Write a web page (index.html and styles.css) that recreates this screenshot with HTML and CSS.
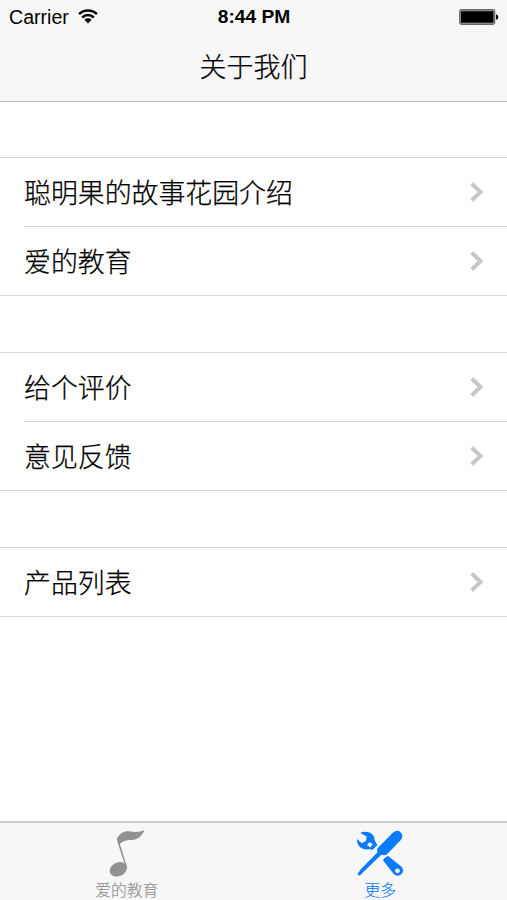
FILE: index.html
```html
<!DOCTYPE html>
<html lang="zh-CN">
<head>
<meta charset="utf-8">
<title>关于我们</title>
<link rel="stylesheet" href="styles.css">
</head>
<body>
<div class="screen">
  <header class="header">
    <div class="status">
      <div class="status-left">
        <span class="carrier">Carrier</span>
        <svg class="wifi" viewBox="0 0 20 15">
          <path d="M1.1 5.2A12.6 12.6 0 0 1 18.9 5.2M4.2 8.5A8.2 8.2 0 0 1 15.8 8.500" fill="none" stroke="#000" stroke-width="2.5"/>
          <path d="M6.4 10.8A5.1 5.1 0 0 1 13.6 10.8L10 14.4Z"/>
        </svg>
      </div>
      <span class="time">8:44 PM</span>
      <div class="status-right">
        <svg class="battery" viewBox="0 0 40 16">
          <rect x=".7" y=".7" width="35" height="14.6" rx="2.2" fill="#999" stroke="#666" stroke-width="1.2"/>
          <rect x="2" y="2.2" width="32.4" height="11.6" rx=".8"/>
          <path d="M37 5.2Q39.4 5.6 39.4 8T37 10.8Z"/>
        </svg>
      </div>
    </div>
    <h1 class="title">关于我们</h1>
  </header>

  <main class="content">
    <ul class="group">
      <li class="row"><span class="label">聪明果的故事花园介绍</span><svg class="chevron" viewBox="0 0 14 20"><path d="M1.700 1.500L10.500 10L1.700 18.500"/></svg></li>
      <li class="row"><span class="label">爱的教育</span><svg class="chevron" viewBox="0 0 14 20"><path d="M1.700 1.500L10.500 10L1.700 18.500"/></svg></li>
    </ul>
    <ul class="group">
      <li class="row"><span class="label">给个评价</span><svg class="chevron" viewBox="0 0 14 20"><path d="M1.700 1.500L10.500 10L1.700 18.500"/></svg></li>
      <li class="row"><span class="label">意见反馈</span><svg class="chevron" viewBox="0 0 14 20"><path d="M1.700 1.500L10.500 10L1.700 18.500"/></svg></li>
    </ul>
    <ul class="group">
      <li class="row"><span class="label">产品列表</span><svg class="chevron" viewBox="0 0 14 20"><path d="M1.700 1.500L10.500 10L1.700 18.500"/></svg></li>
    </ul>
  </main>

  <nav class="tabs">
    <a class="tab">
      <svg class="tab-icon" viewBox="0 0 48 48">
        <path d="M14.200 9.500C17 3.500 22 1.500 27 2.300C32 3.200 37 2.800 41 1C38.500 6 34.500 10.500 29 10.500C23 10.500 19.500 11.500 17.200 14.500L23.800 35.500C25 41 19.500 45.600 13.800 45.600C9.800 45.600 7.200 43 7.400 40C7.700 35 13 31.500 18 31.700Q20.500 31.900 21.600 33.200L15 13Z"/>
      </svg>
      <span class="tab-label">爱的教育</span>
    </a>
    <a class="tab tab-active">
      <svg class="tab-icon" viewBox="0 0 48 48">
        <path d="M36.800 3.200Q39.500 .8 42.300 2L44.900 4.600Q46.300 7.200 44.200 10.200L31.500 23.500Q28.800 26 26 24.700L24.800 25.200L9.500 39.800L5 44.500Q3.300 45.100 2.400 43.300L6 38.200L21.200 22.700L21.300 21.300Q20.600 19.300 22.300 17.700Z"/>
        <path fill-rule="evenodd" d="M5 3.800Q9 1.700 13.800 3.300Q18.600 5.100 18.800 10.600L21.500 15.600L16.300 20.400L14.800 19.100Q9.300 20.500 5.300 17.700Q1.700 14.800 1.900 9.700L6.500 13.700L10.500 11.600L11.200 7.200ZM13.500 12.600L11.600 15.700L14.800 17.700L17.100 14.500Z"/>
        <path fill-rule="evenodd" d="M26.800 30.100Q28.500 26.800 31.900 26L44.700 36.300Q47.600 40 44.800 43.300Q41.200 46.300 37.400 43.400ZM40.800 37.800A2.300 2.300 0 1 0 40.800 42.400A2.300 2.300 0 1 0 40.800 37.800Z"/>
      </svg>
      <span class="tab-label">更多</span>
    </a>
  </nav>
</div>
</body>
</html>
```
FILE: styles.css
```css
* { box-sizing: border-box; }
body {
  margin: 0;
  background: #fff;
  color: #000;
  font-family: "Liberation Sans", "Noto Sans CJK SC", sans-serif;
}
.screen { width: 507px; height: 900px; display: flex; flex-direction: column; overflow: hidden; }
.header { height: 102px; background: #f7f7f7; border-bottom: 1px solid #b9b9b9; }
.status {
  height: 32px;
  padding: 0 8px 0 9px;
  display: grid;
  grid-template-columns: 1fr auto 1fr;
  align-items: center;
}
.status-left { display: flex; align-items: center; gap: 9px; }
.carrier { font-size: 19.6px; line-height: 32px; }
.wifi { width: 20px; height: 15px; }
.time { font-size: 19.2px; font-weight: 700; line-height: 32px; padding-top: 1px; }
.status-right { display: flex; justify-content: flex-end; }
.battery { width: 40px; height: 16px; }
.title {
  margin: 0;
  text-align: center;
  font-family: "Noto Sans CJK SC", sans-serif;
  font-size: 27px;
  font-weight: 300;
  line-height: 68px;
  -webkit-text-stroke: .25px currentColor;
}
.content { flex: 1; }
.group {
  list-style: none;
  margin: 55px 0 0;
  padding: 0;
  border-top: 1px solid #d5d5d5;
  border-bottom: 1px solid #d5d5d5;
}
.group + .group { margin-top: 56px; }
.row {
  height: 68px;
  margin-left: 24px;
  padding-right: 23px;
  display: flex;
  align-items: center;
  justify-content: space-between;
}
.row + .row { border-top: 1px solid #d5d5d5; height: 69px; }
.label {
  font-family: "Noto Sans CJK SC", sans-serif;
  font-size: 26.9px;
  font-weight: 300;
  line-height: 40px;
  padding-bottom: 1px;
  -webkit-text-stroke: .25px currentColor;
}
.chevron { width: 14px; height: 20px; fill: none; stroke: #c7c7c7; stroke-width: 4; }
.tabs { height: 79px; display: flex; background: #f7f7f7; border-top: 2px solid #cfcfcf; }
.tab {
  flex: 1;
  display: flex;
  flex-direction: column;
  align-items: center;
  padding-top: 6px;
  color: #929292;
}
.tab-active { color: #0a7aff; }
.tab-icon { width: 50px; height: 50px; flex: none; fill: currentColor; }
.tab-label {
  font-family: "Noto Sans CJK SC", sans-serif;
  font-size: 15.8px;
  font-weight: 300;
  line-height: 22px;
  -webkit-text-stroke: .15px currentColor;
}
```
